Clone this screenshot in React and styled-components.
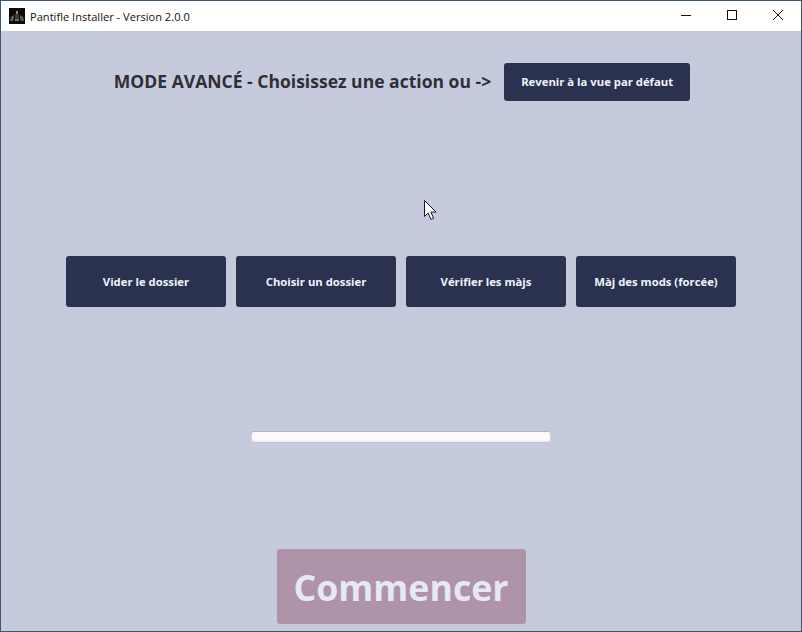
import React from "react";
import styled, { createGlobalStyle } from "styled-components";

const Global = createGlobalStyle`
  html, body {
    margin: 0;
    padding: 0;
    background: #c5cbdc;
  }
  * {
    box-sizing: border-box;
  }
`;

const Window = styled.div`
  position: relative;
  width: 802px;
  height: 632px;
  display: flex;
  flex-direction: column;
  border: 1px solid #3d566f;
  background: #c5cbdc;
  font-family: "Open Sans", "Noto Sans", sans-serif;
  overflow: hidden;
`;

const TitleBar = styled.div`
  height: 30px;
  flex: none;
  display: flex;
  align-items: center;
  background: #ffffff;
  padding-left: 8px;
`;

const AppIcon = styled.svg`
  width: 16px;
  height: 16px;
  margin-right: 5px;
`;

const TitleText = styled.div`
  font-size: 11.1px;
  color: #111111;
  white-space: nowrap;
`;

const WinButtons = styled.div`
  margin-left: auto;
  display: flex;
  height: 100%;
`;

const WinButton = styled.div`
  width: 46px;
  height: 100%;
  display: flex;
  align-items: center;
  justify-content: center;
  margin-top: -1px;
`;

const Content = styled.div`
  flex: 1;
  display: flex;
  flex-direction: column;
  align-items: center;
`;

const Header = styled.div`
  display: flex;
  align-items: center;
  gap: 13px;
  margin-top: 32px;
  padding-left: 2px;
`;

const Heading = styled.div`
  font-size: 17.55px;
  font-weight: 700;
  color: #2f2f37;
  white-space: nowrap;
  padding-bottom: 2px;
`;

const Button = styled.div`
  display: flex;
  align-items: center;
  justify-content: center;
  background: #2b3250;
  color: #f0f2fa;
  font-size: 11.3px;
  font-weight: 700;
  border-radius: 3px;
  white-space: nowrap;
  padding-bottom: 1px;
`;

const BackButton = styled(Button)`
  width: 186px;
  height: 38px;
`;

const Actions = styled.div`
  display: grid;
  grid-template-columns: repeat(4, 160px);
  gap: 10px;
  margin-top: 155px;
`;

const ActionButton = styled(Button)`
  height: 51px;
`;

const Progress = styled.div`
  width: 300px;
  height: 12px;
  margin-top: 124px;
  border-radius: 3px;
  background: linear-gradient(#fbf8fc, #fdfbfe 70%, #efeaf1);
  border: 1px solid #b4b1c2;
  border-left-color: #cfcfdc;
  border-right-color: #cfcfdc;
  border-bottom-color: #c6c3d2;
`;

const StartButton = styled.div`
  width: 249px;
  height: 75px;
  margin-top: 106px;
  display: flex;
  align-items: center;
  justify-content: center;
  background: #ae93a9;
  color: #e6e8f3;
  font-size: 35.7px;
  font-weight: 700;
  border-radius: 3px;
`;

const Cursor = styled.svg`
  position: absolute;
  left: 422px;
  top: 198px;
  width: 15px;
  height: 22px;
`;

const actions = [
  "Vider le dossier",
  "Choisir un dossier",
  "Vérifier les màjs",
  "Màj des mods (forcée)",
];

export default function App() {
  return (
    <>
      <Global />
      <Window>
        <TitleBar>
          <AppIcon viewBox="0 0 16 16">
            <rect width="16" height="16" fill="#0b0b0b" />
            <path d="M7 3h2v3H7z" fill="#8a8a8a" />
            <path d="M6 6h4v5H6z" fill="#3a3a3a" />
            <path d="M5 7L2 9l-1 4h3l1-3zM11 7l3 2 1 4h-3l-1-3z" fill="#5c5c5c" />
            <path d="M6 11h4v2H6z" fill="#6e6e6e" />
          </AppIcon>
          <TitleText>Pantifle Installer - Version 2.0.0</TitleText>
          <WinButtons>
            <WinButton>
              <svg width="10" height="10" viewBox="0 0 10 10">
                <path d="M0 5.5h10" stroke="#111" fill="none" />
              </svg>
            </WinButton>
            <WinButton>
              <svg width="10" height="10" viewBox="0 0 10 10">
                <rect x="0.5" y="0.5" width="9" height="9" stroke="#111" fill="none" />
              </svg>
            </WinButton>
            <WinButton>
              <svg width="10" height="10" viewBox="0 0 10 10">
                <path d="M0 0l10 10M10 0L0 10" stroke="#111" strokeWidth="1" fill="none" />
              </svg>
            </WinButton>
          </WinButtons>
        </TitleBar>
        <Content>
          <Header>
            <Heading>MODE AVANCÉ - Choisissez une action ou -&gt;</Heading>
            <BackButton>Revenir à la vue par défaut</BackButton>
          </Header>
          <Actions>
            {actions.map((label) => (
              <ActionButton key={label}>{label}</ActionButton>
            ))}
          </Actions>
          <Progress />
          <StartButton>Commencer</StartButton>
        </Content>
        <Cursor viewBox="0 0 15 22">
          <path
            d="M1.5 1.5v16l3.7-3.5 2.7 6.4 2.7-1.1-2.7-6.2h5.2z"
            fill="#fff"
            stroke="#16162a"
            strokeWidth="1"
          />
        </Cursor>
      </Window>
    </>
  );
}
